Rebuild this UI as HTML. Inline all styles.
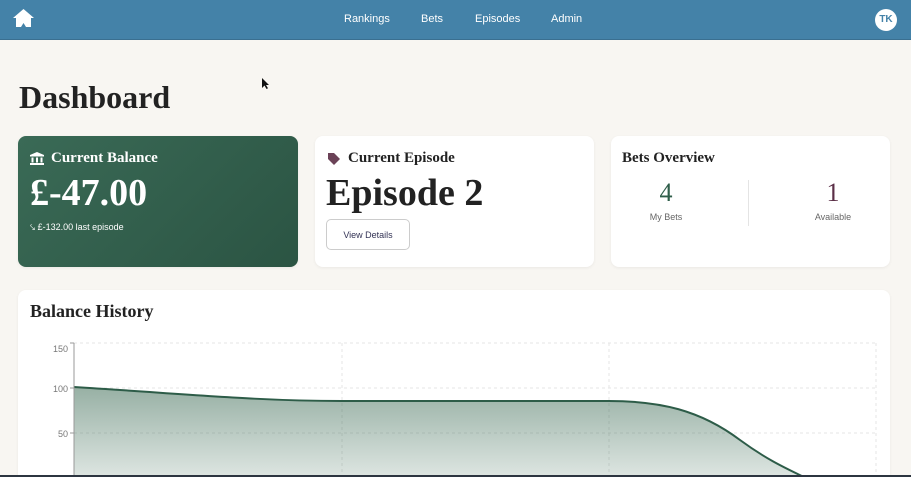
<!DOCTYPE html>
<html><head><meta charset="utf-8"><style>
*{margin:0;padding:0;box-sizing:border-box}
html,body{width:911px;height:477px;overflow:hidden}
body{background:#f8f6f2;font-family:"Liberation Sans",sans-serif;position:relative}
.nav{position:absolute;left:0;top:0;width:911px;height:40px;background:#4482a8;border-bottom:1px solid #3a6f90}
.nav a{position:absolute;top:13px;color:#fff;font-size:11px;text-decoration:none}
.av{position:absolute;left:875px;top:9px;width:22px;height:22px;border-radius:50%;background:#fff;color:#4482a8;font-size:10px;font-weight:bold;text-align:center;line-height:22px}
.serif{font-family:"Liberation Serif",serif}
h1{position:absolute;left:19px;top:79px;font-size:32px;color:#222;font-weight:bold;font-family:"Liberation Serif",serif}
.card{position:absolute;background:#fff;border-radius:8px;box-shadow:0 1px 3px rgba(0,0,0,.06)}
</style></head><body>
<div class="nav">
<svg style="position:absolute;left:12px;top:8px" width="23" height="20" viewBox="0 0 23 20"><path d="M11.5 1 L22 10 L19 10 L19 19 L14 19 L11.5 15 L9 19 L4 19 L4 10 L1 10 Z" fill="#fff"/></svg>
<a style="left:344px">Rankings</a><a style="left:421px">Bets</a><a style="left:475px">Episodes</a><a style="left:551px">Admin</a>
<div class="av">TK</div>
</div>
<h1>Dashboard</h1>
<div class="card" style="left:18px;top:136px;width:280px;height:131px;background:linear-gradient(135deg,#3a6a56,#2b5443)">
<svg style="position:absolute;left:12px;top:16px" width="14" height="13" viewBox="0 0 14 13"><path d="M7 0 L14 3 L14 4.5 L0 4.5 L0 3 Z M1.5 5.5h2v5h-2z M6 5.5h2v5H6z M10.5 5.5h2v5h-2z M0 11h14v2H0z" fill="#fff"/></svg>
<div class="serif" style="position:absolute;left:33px;top:14px;color:#fff;font-size:15px;font-weight:bold">Current Balance</div>
<div class="serif" style="position:absolute;left:12px;top:35px;color:#fff;font-size:38px;font-weight:bold">£-47.00</div>
<div style="position:absolute;left:12px;top:86px;color:#fff;font-size:9px">⤥ £-132.00 last episode</div>
</div>
<div class="card" style="left:315px;top:136px;width:279px;height:131px">
<svg style="position:absolute;left:12px;top:16px" width="14" height="14" viewBox="0 0 14 14"><path d="M1 1 L7 1 L13 7 L7 13 L1 7 Z" fill="#6b4257"/></svg>
<div class="serif" style="position:absolute;left:33px;top:14px;color:#222;font-size:15px;font-weight:bold">Current Episode</div>
<div class="serif" style="position:absolute;left:11px;top:35px;color:#222;font-size:38px;font-weight:bold">Episode 2</div>
<div style="position:absolute;left:11px;top:83px;width:84px;height:31px;border:1px solid #ccc;border-radius:5px;font-size:9px;color:#335;text-align:center;line-height:30px">View Details</div>
</div>
<div class="card" style="left:611px;top:136px;width:279px;height:131px">
<div class="serif" style="position:absolute;left:11px;top:14px;color:#222;font-size:15px;font-weight:bold">Bets Overview</div>
<div class="serif" style="position:absolute;left:35px;top:42px;width:40px;text-align:center;color:#2f5e4a;font-size:26px">4</div>
<div style="position:absolute;left:25px;top:76px;width:60px;text-align:center;color:#666;font-size:9px">My Bets</div>
<div style="position:absolute;left:137px;top:44px;width:1px;height:46px;background:#e4e4e4"></div>
<div class="serif" style="position:absolute;left:202px;top:42px;width:40px;text-align:center;color:#5b2f47;font-size:26px">1</div>
<div style="position:absolute;left:192px;top:76px;width:60px;text-align:center;color:#666;font-size:9px">Available</div>
</div>
<div class="card" style="left:18px;top:290px;width:872px;height:187px;border-radius:8px 8px 0 0">
<div class="serif" style="position:absolute;left:12px;top:11px;color:#222;font-size:18px;font-weight:bold">Balance History</div>
</div>
<svg style="position:absolute;left:0;top:0" width="911" height="477">
<defs><linearGradient id="g" x1="0" y1="0" x2="0" y2="1"><stop offset="0" stop-color="#2f6149" stop-opacity=".5"/><stop offset="1" stop-color="#2f6149" stop-opacity=".15"/></linearGradient></defs>
<g stroke="#e6e6e6" stroke-dasharray="3 3" fill="none">
<line x1="74" y1="343" x2="876" y2="343"/><line x1="74" y1="388" x2="876" y2="388"/><line x1="74" y1="433" x2="876" y2="433"/>
<line x1="342" y1="343" x2="342" y2="477"/><line x1="609" y1="343" x2="609" y2="477"/><line x1="876" y1="343" x2="876" y2="477"/>
</g>
<path d="M74 387 C200 395 260 401 342 401 L609 401 C660 401 700 410 740 440 C770 462 790 470 810 480 L74 480 Z" fill="url(#g)"/>
<path d="M74 387 C200 395 260 401 342 401 L609 401 C660 401 700 410 740 440 C770 462 790 470 810 480" stroke="#2d5c48" stroke-width="2" fill="none"/>
<line x1="74" y1="343" x2="74" y2="477" stroke="#999"/>
<g font-size="9" fill="#777" text-anchor="end" font-family="Liberation Sans,sans-serif">
<text x="68" y="352">150</text><text x="68" y="392">100</text><text x="68" y="437">50</text></g>
<g stroke="#999"><line x1="70" y1="343" x2="74" y2="343"/><line x1="70" y1="388" x2="74" y2="388"/><line x1="70" y1="433" x2="74" y2="433"/></g>
<rect x="0" y="475" width="911" height="2" fill="#2c3540"/>
</svg>
<svg style="position:absolute;left:262px;top:78px" width="8" height="12" viewBox="0 0 8 12"><path d="M0 0 L0 10 L2.5 7.5 L4.5 11 L6 10.3 L4 7 L7 7 Z" fill="#111"/></svg>
</body></html>
